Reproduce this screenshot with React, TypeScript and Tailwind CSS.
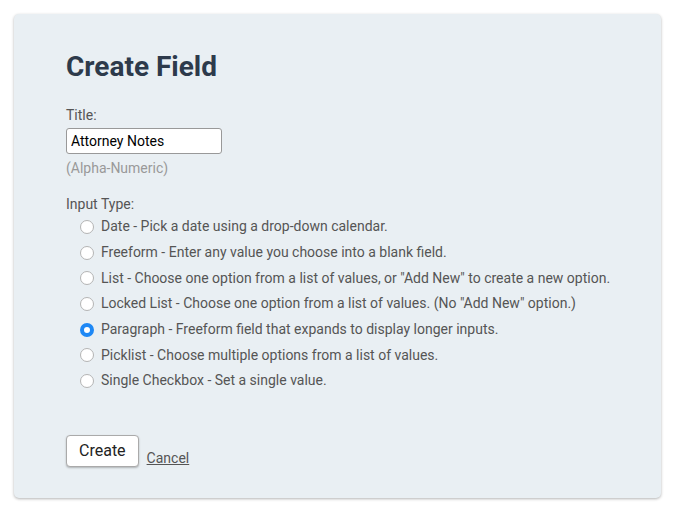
import { useState } from "react";

const options = [
  { value: "date", label: "Date - Pick a date using a drop-down calendar." },
  { value: "freeform", label: "Freeform - Enter any value you choose into a blank field." },
  { value: "list", label: 'List - Choose one option from a list of values, or "Add New" to create a new option.' },
  { value: "locked", label: 'Locked List - Choose one option from a list of values. (No "Add New" option.)' },
  { value: "paragraph", label: "Paragraph - Freeform field that expands to display longer inputs." },
  { value: "picklist", label: "Picklist - Choose multiple options from a list of values." },
  { value: "checkbox", label: "Single Checkbox - Set a single value." },
];

export default function App() {
  const [title, setTitle] = useState("Attorney Notes");
  const [type, setType] = useState("paragraph");

  return (
    <div className="min-h-[511px] bg-white p-[14px] pr-[18px] font-['Roboto',sans-serif]">
      <div className="rounded-[5px] bg-[#e9eff3] pl-[52px] pt-[36px] pb-[31px] shadow-[0_1px_3px_rgba(0,0,0,0.3)]">
        <h1 className="text-[28px] font-bold leading-[34px] text-[#2d3a4b]">Create Field</h1>

        <div className="mt-[22px]">
          <label className="block text-[14px] leading-[18px] text-[#555]">Title:</label>
          <input
            value={title}
            onChange={(e) => setTitle(e.target.value)}
            className="mt-[4px] block h-[26px] w-[156px] rounded-[3px] border border-[#999] bg-white px-[4px] text-[14px] text-black outline-none"
          />
          <div className="mt-[5px] text-[14px] leading-[18px] text-[#999]">(Alpha-Numeric)</div>
        </div>

        <div className="mt-[18px]">
          <div className="text-[14px] leading-[18px] text-[#555]">Input Type:</div>
          <div className="mt-[1px] flex flex-col">
            {options.map((o) => (
              <label key={o.value} className="flex h-[25.7px] items-center gap-[7px] pl-[14px] text-[14px] text-[#555]">
                <input
                  type="radio"
                  name="type"
                  checked={type === o.value}
                  onChange={() => setType(o.value)}
                  className="m-0 h-[14px] w-[14px] shrink-0 appearance-none rounded-full border border-[#b4b4b4] bg-white checked:border-[4.5px] checked:border-[#1e88f5]"
                />
                <span>{o.label}</span>
              </label>
            ))}
          </div>
        </div>

        <div className="mt-[41px] flex items-end gap-[8px]">
          <button className="h-[32px] rounded-[4px] border border-[#aaa] bg-white px-[12px] text-[16px] text-[#222] shadow-[0_1px_2px_rgba(0,0,0,0.25)]">
            Create
          </button>
          <a href="#" className="mb-[-2px] text-[14px] text-[#555] underline">Cancel</a>
        </div>
      </div>
    </div>
  );
}
